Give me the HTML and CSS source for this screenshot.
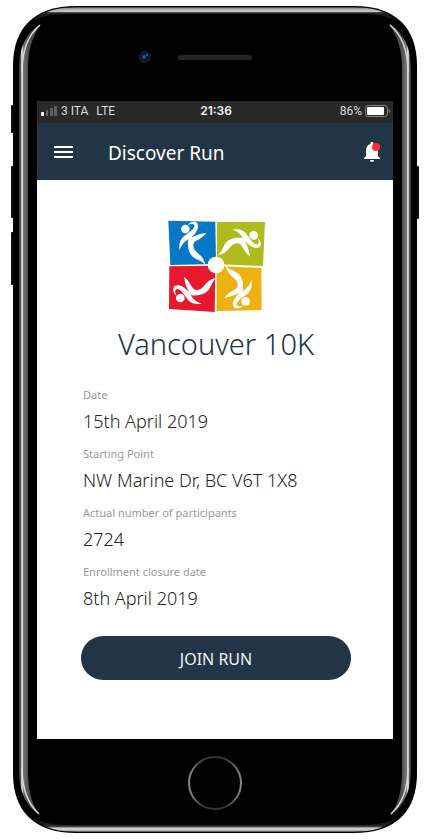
FILE: index.html
```html
<!DOCTYPE html>
<html lang="en">
<head>
<meta charset="utf-8">
<meta name="viewport" content="width=device-width, initial-scale=1">
<title>Discover Run</title>
<link rel="stylesheet" href="styles.css">
</head>
<body>
<div class="phone">
  <svg class="chassis" viewBox="0 0 430 840" preserveAspectRatio="none" aria-hidden="true">
    <defs>
      <linearGradient id="edgeL" gradientUnits="userSpaceOnUse" x1="19" x2="28" y1="0" y2="0">
        <stop offset="0" stop-color="#3c3c3c"/><stop offset=".2" stop-color="#555"/><stop offset=".26" stop-color="#c4c4c4"/><stop offset=".4" stop-color="#d4d4d4"/><stop offset=".5" stop-color="#777"/><stop offset="1" stop-color="#505050"/>
      </linearGradient>
      <linearGradient id="edgeR" gradientUnits="userSpaceOnUse" x1="411" x2="402" y1="0" y2="0">
        <stop offset="0" stop-color="#3c3c3c"/><stop offset=".2" stop-color="#555"/><stop offset=".26" stop-color="#c4c4c4"/><stop offset=".4" stop-color="#d4d4d4"/><stop offset=".5" stop-color="#777"/><stop offset="1" stop-color="#505050"/>
      </linearGradient>
      <linearGradient id="edgeT" gradientUnits="userSpaceOnUse" x1="0" x2="0" y1="7" y2="14">
        <stop offset="0" stop-color="#333"/><stop offset=".25" stop-color="#a5a7ab"/><stop offset=".65" stop-color="#c6c8cc"/><stop offset=".75" stop-color="#4a4d50"/><stop offset="1" stop-color="#1c1d1e"/>
      </linearGradient>
      <linearGradient id="edgeB" gradientUnits="userSpaceOnUse" x1="0" x2="0" y1="832" y2="825">
        <stop offset="0" stop-color="#333"/><stop offset=".25" stop-color="#c8c8ca"/><stop offset=".6" stop-color="#cfcfd1"/><stop offset=".7" stop-color="#4a4d50"/><stop offset="1" stop-color="#1c1d1e"/>
      </linearGradient>
    </defs>
    <g fill="#0b0e11">
      <rect x="11" y="105" width="6" height="28" rx="1"/>
      <rect x="11" y="166" width="6" height="52" rx="1"/>
      <rect x="11" y="232" width="6" height="53" rx="1"/>
      <rect x="413" y="166" width="6" height="53" rx="1"/>
    </g>
    <path d="M13 66C13 28 34 6 76 6H354C396 6 417 28 417 66V773C417 811 396 833 354 833H76C34 833 13 811 13 773Z"/>
    <path d="M33 21C44 11 57 7 80 7H350C373 7 386 11 397 21C384 14 372 14 350 14H80C58 14 46 14 33 21Z" fill="url(#edgeT)"/>
    <path d="M33 818C44 828 57 832 80 832H350C373 832 386 828 397 818C384 825 372 825 350 825H80C58 825 46 825 33 818Z" fill="url(#edgeB)"/>
    <path d="M41 24C25 33 19 49 19 70V769C19 790 25 806 40 815C31 804 28 789 28 770V69C28 50 32 37 41 24Z" fill="url(#edgeL)"/>
    <path d="M389 24C405 33 411 49 411 70V769C411 790 405 806 390 815C399 804 402 789 402 770V69C402 50 398 37 389 24Z" fill="url(#edgeR)"/>
    <path d="M40 25C28 35 22 50 22 72M390 25C402 35 408 50 408 72M22 768C22 789 28 804 39 814M408 768C408 789 402 804 391 814" fill="none" stroke="#d8d8d8" stroke-width="1.500"/>
  </svg>
  <div class="bezel bezel-top">
    <svg class="sensors" viewBox="0 0 116 16" aria-hidden="true">
      <circle cx="7" cy="8" r="6" fill="#1b1b1d"/><circle cx="7" cy="8" r="4" fill="#0a1230"/><circle cx="6" cy="8" r="2" fill="#2449a8"/><circle cx="9" cy="6" r="1" fill="#3a5bb5"/>
      <rect x="40" y="6" width="74" height="5" rx="2.500" fill="#262626"/>
    </svg>
  </div>
  <div class="screen">
    <div class="status">
      <div class="carrier">
        <svg class="signal" viewBox="0 0 17 12" aria-hidden="true"><rect x="0" y="7" width="3" height="4" rx="1" fill="#fff"/><g fill="#606060"><rect x="5" y="5" width="2" height="6"/><rect x="9" y="3" width="3" height="8"/><rect x="13" y="1" width="3" height="10"/></g></svg>
        <span>3 ITA</span><span>LTE</span>
      </div>
      <span class="clock">21:36</span>
      <div class="power">
        <span>86%</span>
        <svg class="battery" viewBox="0 0 26 12" aria-hidden="true"><rect x=".5" y=".5" width="22" height="11" rx="3" fill="none" stroke="#888"/><rect x="2" y="2" width="17" height="8" rx="1" fill="#fff"/><path d="M24 4q2 2 0 4z" fill="#888"/></svg>
      </div>
    </div>
    <header class="appbar">
      <button class="icon-btn menu" aria-label="Menu"><svg viewBox="0 0 19 12"><path d="M0 1H19M0 6H19M0 11H19" stroke="#fff" stroke-width="2"/></svg></button>
      <h1>Discover Run</h1>
      <button class="icon-btn bell" aria-label="Notifications"><svg viewBox="0 0 17 20"><path d="M8 0c1 0 1.500.6 1.500 2 3 .8 4.500 3 4.500 6v6l2 2v1H0v-1l2-2V8c0-3 1.500-5.200 4.500-6C6.500.6 7 0 8 0ZM6 18h4q0 2-2 2t-2-2Z" fill="#fff"/><circle cx="12" cy="5" r="4" fill="#ff2d2d"/></svg></button>
    </header>
    <main>
      <svg class="logo" viewBox="0 0 336 324" role="img" aria-label="Vancouver 10K logo">
        <defs>
          <g id="runner">
            <circle cx="281" cy="70" r="13"/>
            <path d="M217 53C240 49 254 56 264 72C274 88 284 99 292 97C298 94 297 86 293 77C304 86 305 100 298 106C286 112 268 104 256 88C246 72 238 59 217 53Z"/>
            <path d="M266 83C238 73 210 77 197 93C188 105 186 119 174 130C199 125 205 110 216 100C226 92 238 92 244 100C250 110 256 123 270 134C268 116 262 101 256 90Z"/>
          </g>
        </defs>
        <path d="M25 26 166 29 168 156 31 159Z" fill="#0877c5"/>
        <path d="M171 30 315 30 309 162 171 157Z" fill="#afbb1c"/>
        <path d="M28 163 166 161 164 300 27 291Z" fill="#e8192f"/>
        <path d="M170 162 304 168 305 294 170 297Z" fill="#edb112"/>
        <g fill="#fff">
          <circle cx="168" cy="159" r="25"/>
          <use href="#runner"/>
          <use href="#runner" transform="rotate(-90 169 163)"/>
          <use href="#runner" transform="rotate(180 171 164)"/>
          <use href="#runner" transform="rotate(90 170 157)"/>
        </g>
      </svg>
      <h2>Vancouver 10K</h2>
      <dl>
        <div><dt>Date</dt><dd>15th April 2019</dd></div>
        <div><dt>Starting Point</dt><dd>NW Marine Dr, BC V6T 1X8</dd></div>
        <div><dt>Actual number of participants</dt><dd>2724</dd></div>
        <div><dt>Enrollment closure date</dt><dd>8th April 2019</dd></div>
      </dl>
      <button class="join">JOIN RUN</button>
    </main>
  </div>
  <div class="bezel bezel-bottom">
    <svg class="home" viewBox="0 0 56 56" aria-hidden="true">
      <defs><linearGradient id="ring" x1="0" x2="1" y1="0" y2="0"><stop offset="0" stop-color="#8a8a90"/><stop offset=".3" stop-color="#333338"/><stop offset=".7" stop-color="#333338"/><stop offset="1" stop-color="#85858b"/></linearGradient></defs>
      <circle cx="28" cy="28" r="26" fill="#020203" stroke="url(#ring)" stroke-width="2"/>
    </svg>
  </div>
</div>
</body>
</html>
```
FILE: styles.css
```css
* { box-sizing: border-box; }

body {
  margin: 0;
  background: #fff;
  font-family: "Noto Sans", "Open Sans", sans-serif;
}

button {
  border: 0;
  font: inherit;
  cursor: pointer;
}

svg { display: block; }

.phone {
  position: relative;
  display: flex;
  flex-direction: column;
  min-height: 100vh;
  padding: 6px 37px 7px;
}

.chassis {
  position: absolute;
  inset: 0;
  width: 100%;
  height: 100%;
}

.bezel,
.screen { position: relative; }

.bezel {
  display: flex;
  justify-content: center;
}

.bezel-top {
  height: 95px;
  padding: 43px 38px 0 0;
}

.sensors {
  width: 116px;
  height: 16px;
}

.bezel-bottom {
  height: 94px;
  padding-top: 16px;
}

.home {
  width: 56px;
  height: 56px;
}

.screen {
  flex: 1;
  display: flex;
  flex-direction: column;
  background: #fff;
}

.status {
  display: grid;
  grid-template-columns: 1fr auto 1fr;
  align-items: center;
  height: 22px;
  padding: 0 2px 3px 4px;
  background: #292929;
  color: #ddd;
  font-family: Roboto, sans-serif;
  font-size: 12px;
}

.carrier,
.power {
  display: flex;
  align-items: center;
}

.carrier { gap: 8px; }
.signal { width: 17px; height: 12px; margin-right: -5px; }
.clock { color: #f2f2f2; font-family: Inter, sans-serif; font-weight: 600; }
.power { justify-content: flex-end; gap: 3px; }
.battery { width: 26px; height: 12px; }

.appbar {
  display: flex;
  align-items: center;
  height: 57px;
  padding: 0 12px 0 17px;
  background: #213546;
  color: #fff;
}

.appbar h1 {
  flex: 1;
  margin: 0;
  padding: 3px 0 0 35px;
  font-size: 19px;
  line-height: 24px;
  font-weight: 400;
}

.icon-btn {
  padding: 0;
  background: none;
}

.menu svg { width: 19px; height: 12px; }
.bell svg { width: 17px; height: 20px; }

main {
  display: flex;
  flex-direction: column;
  padding: 32px 42px 0 44px;
}

.logo {
  align-self: center;
  width: 112px;
  height: 108px;
}

h2 {
  margin: 4px 0 23px;
  color: #213546;
  font-size: 29px;
  font-weight: 300;
  line-height: 40px;
  text-align: center;
}

dl {
  display: grid;
  gap: 13px;
  margin: 0;
  padding-left: 2px;
}

dt {
  margin-bottom: 6px;
  color: #999;
  font-size: 11px;
  line-height: 16px;
}

dd {
  margin: 0;
  color: #222;
  font-size: 18px;
  font-weight: 300;
  line-height: 24px;
}

.join {
  height: 44px;
  margin-top: 26px;
  padding: 2px 0 0;
  border-radius: 22px;
  background: #213546;
  color: #f2f2f2;
  font-size: 16px;
}
```
